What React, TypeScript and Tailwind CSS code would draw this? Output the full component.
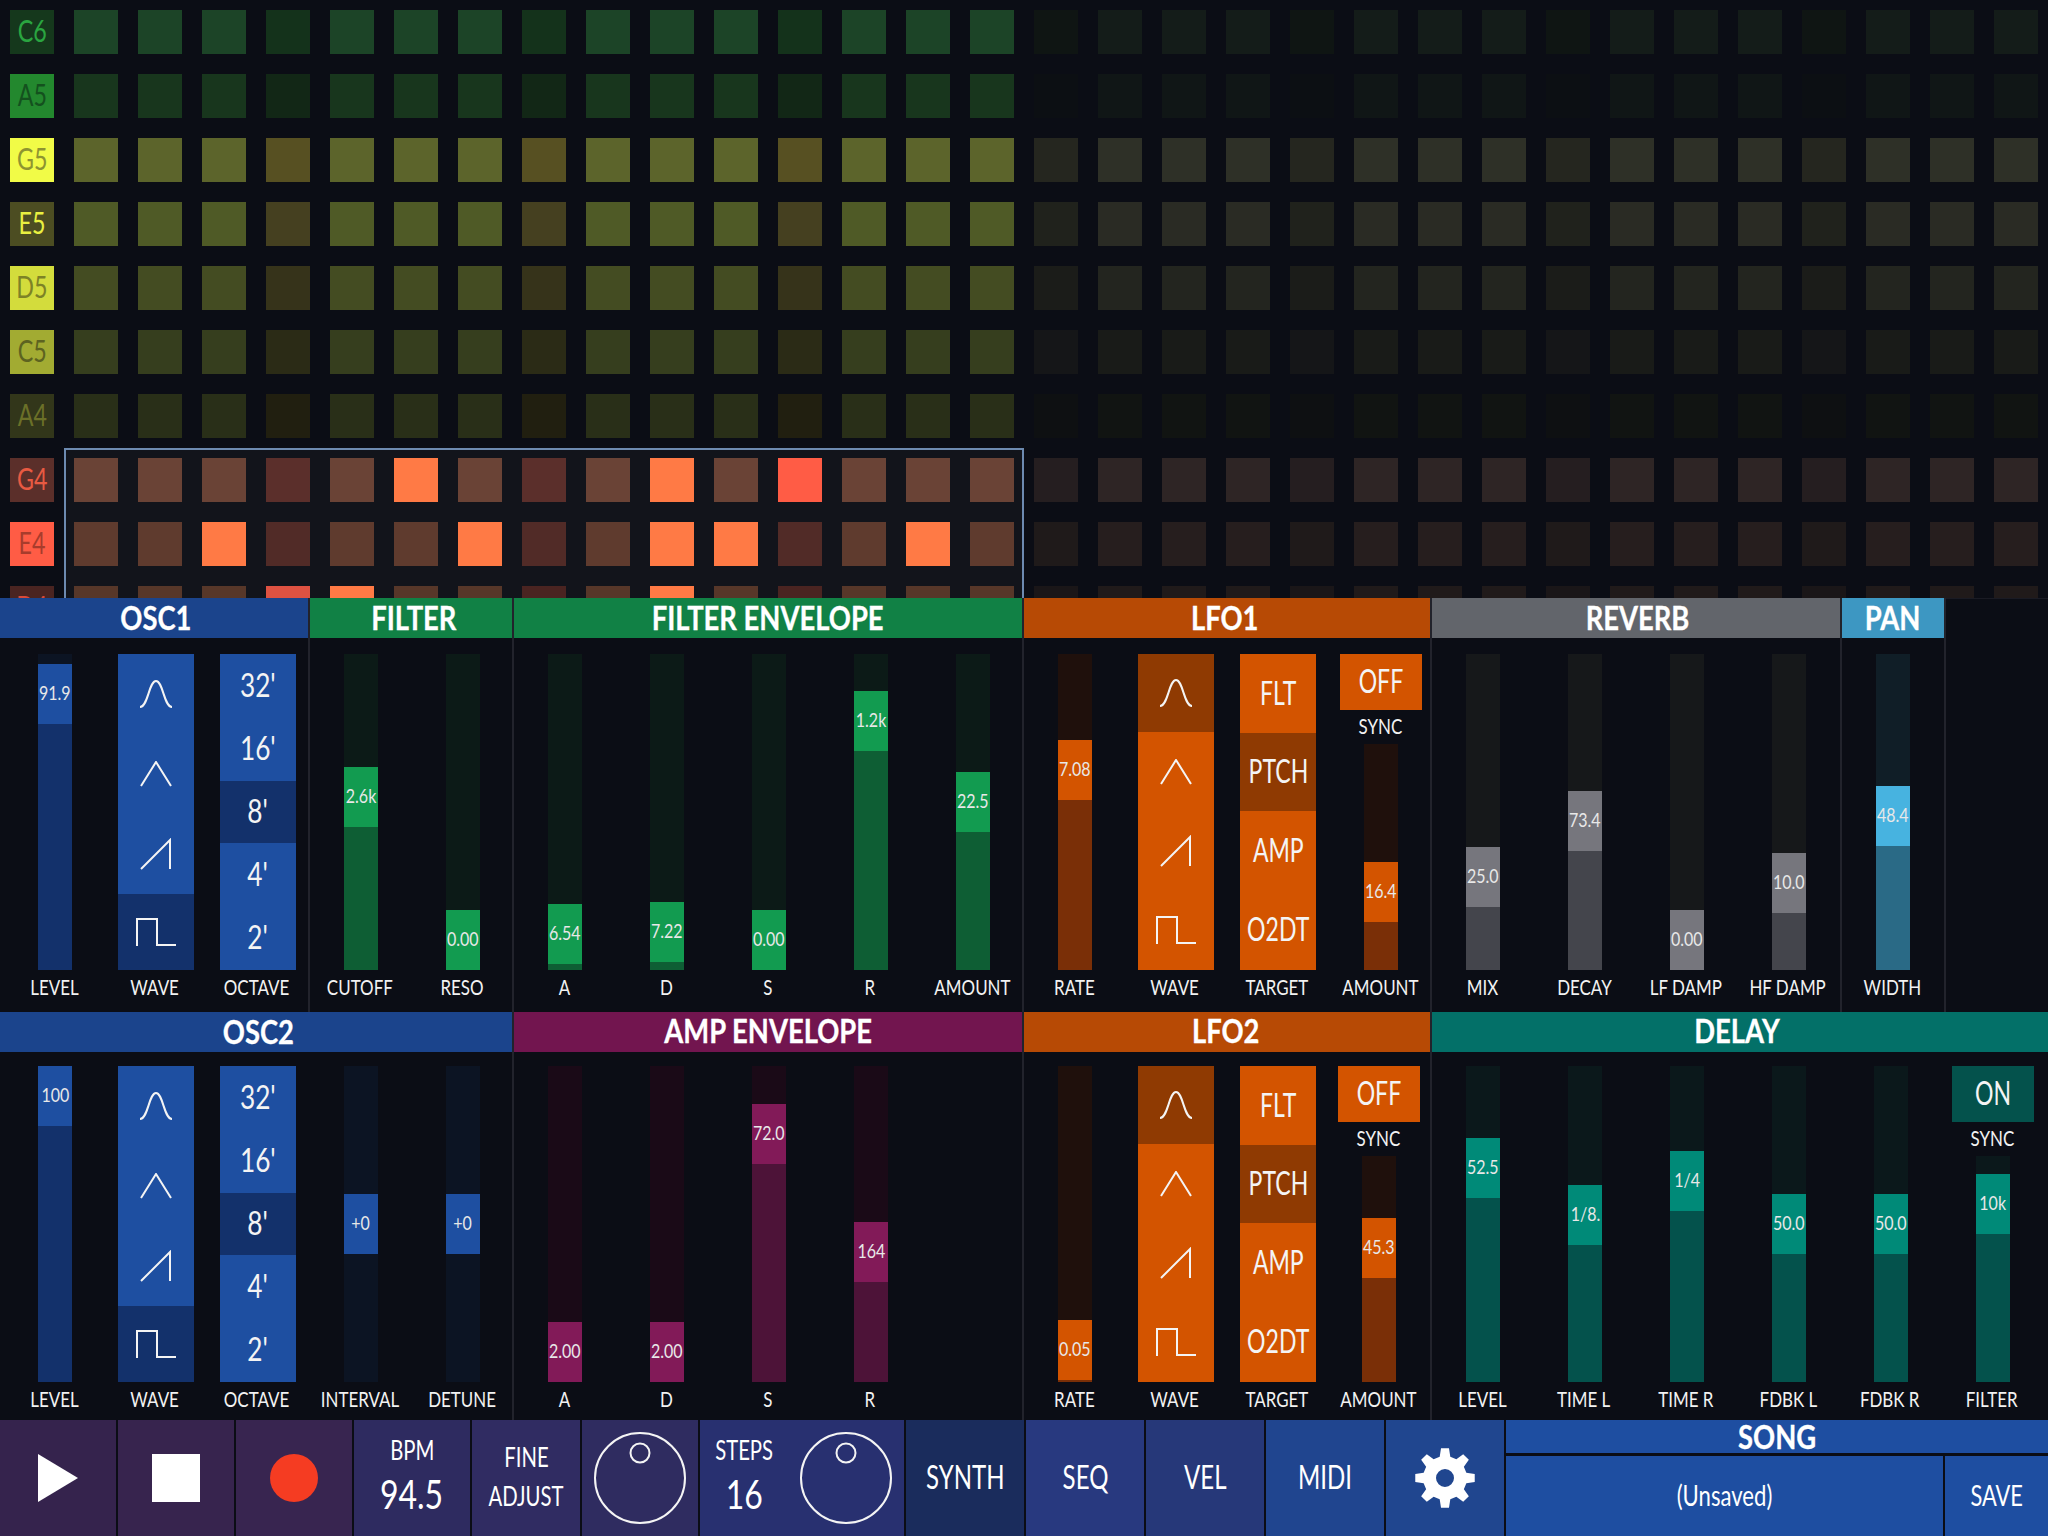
import type { ReactNode } from "react";

// colour sets per synth section
type Pal = { head: string; thumb: string; fill: string; track: string; on: string; off: string };

const blue: Pal = { head: "bg-[#1b448c]", thumb: "bg-[#1e4fa1]", fill: "bg-[#13316b]", track: "bg-[#0c1423]", on: "bg-[#1e4fa1]", off: "bg-[#13316b]" };
const green: Pal = { head: "bg-[#118145]", thumb: "bg-[#129b50]", fill: "bg-[#0e5e34]", track: "bg-[#0c1a17]", on: "bg-[#129b50]", off: "bg-[#0e5e34]" };
const orange: Pal = { head: "bg-[#b74a05]", thumb: "bg-[#d35400]", fill: "bg-[#7a2f07]", track: "bg-[#1f100c]", on: "bg-[#d35400]", off: "bg-[#8f3a02]" };
const gray: Pal = { head: "bg-[#62656b]", thumb: "bg-[#76767d]", fill: "bg-[#44454c]", track: "bg-[#16181a]", on: "bg-[#76767d]", off: "bg-[#44454c]" };
const pan: Pal = { head: "bg-[#3d97c2]", thumb: "bg-[#47b3e0]", fill: "bg-[#2a6a86]", track: "bg-[#101e27]", on: "bg-[#47b3e0]", off: "bg-[#2a6a86]" };
const magenta: Pal = { head: "bg-[#72154f]", thumb: "bg-[#821a58]", fill: "bg-[#4d1338]", track: "bg-[#1a0a17]", on: "bg-[#821a58]", off: "bg-[#4d1338]" };
const teal: Pal = { head: "bg-[#037068]", thumb: "bg-[#008a78]", fill: "bg-[#04524c]", track: "bg-[#0b181b]", on: "bg-[#04524c]", off: "bg-[#04524c]" };

// Lato squeezed sideways stands in for the condensed face of the app
function Cond({ children, x = "scale-x-[0.77]", y = "" }: { children: ReactNode; x?: string; y?: string }) {
  return <span className={`inline-block whitespace-nowrap origin-center ${x} ${y}`}>{children}</span>;
}

function Label({ text }: { text: string }) {
  return (
    <div className="h-[34px] flex items-center justify-center text-[22px] text-[#f2f2f2]">
      <Cond y="-translate-x-[1px] -translate-y-[1px]">{text}</Cond>
    </div>
  );
}

function Bar({ pal, value, top, height = "h-[316px]", noFill }: { pal: Pal; value: string; top: number; height?: string; noFill?: boolean }) {
  return (
    <div className={`w-[34px] flex flex-col ${height} ${pal.track}`}>
      <div className="shrink-0" style={{ height: top }} />
      <div className={`h-[60px] shrink-0 flex items-center justify-center text-[20px] text-[#e8e8e8] ${pal.thumb}`}>
        <Cond x="scale-x-[0.8]" y="-translate-y-[2px]">{value}</Cond>
      </div>
      <div className={`flex-1 ${noFill ? "" : pal.fill}`} />
    </div>
  );
}

function Slider({ pal, value, top, label, ml, noFill }: { pal: Pal; value: string; top: number; label: string; ml: string; noFill?: boolean }) {
  return (
    <div className={`w-[34px] shrink-0 flex flex-col items-center ${ml}`}>
      <Bar pal={pal} value={value} top={top} noFill={noFill} />
      <Label text={label} />
    </div>
  );
}

function SineIcon() {
  return (
    <svg width="34" height="28" viewBox="0 0 34 28" fill="none" stroke="#f4f4f4" strokeWidth="2">
      <path d="M1 27 C9 27 10 1 17 1 C24 1 25 27 33 27" />
    </svg>
  );
}

function TriIcon() {
  return (
    <svg width="34" height="26" viewBox="0 0 34 26" fill="none" stroke="#f4f4f4" strokeWidth="2">
      <path d="M2 25 L17 1 L32 25" />
    </svg>
  );
}

function RampIcon() {
  return (
    <svg width="32" height="32" viewBox="0 0 32 32" fill="none" stroke="#f4f4f4" strokeWidth="2">
      <path d="M1 31 L30 2 V31" />
    </svg>
  );
}

function SquareIcon() {
  return (
    <svg width="40" height="28" viewBox="0 0 40 28" fill="none" stroke="#f4f4f4" strokeWidth="2">
      <path d="M1 28 V1 H21 V27 H40" />
    </svg>
  );
}

const waves = [<SineIcon />, <TriIcon />, <RampIcon />, <SquareIcon />];

function Stack({ pal, items, selected, selH, label, ml }: { pal: Pal; items: ReactNode[]; selected: number; selH: string; label: string; ml: string }) {
  return (
    <div className={`w-[76px] shrink-0 flex flex-col items-center ${ml}`}>
      <div className="w-full h-[316px] flex flex-col">
        {items.map((it, i) => (
          <div key={i} className={`flex items-center justify-center text-[32px] text-[#f4f4f4] ${i === selected ? `${selH} shrink-0 ${pal.off}` : `flex-1 ${pal.on}`}`}>
            {it}
          </div>
        ))}
      </div>
      <Label text={label} />
    </div>
  );
}

function Sync({ pal, text, value, top, label, ml, w }: { pal: Pal; text: string; value: string; top: number; label: string; ml: string; w: string }) {
  return (
    <div className={`shrink-0 flex flex-col items-center ${w} ${ml}`}>
      <div className={`w-full h-[56px] flex items-center justify-center text-[32px] text-[#f4f4f4] ${pal.on}`}>
        <Cond x="scale-x-[0.72]" y="-translate-y-[1px]">{text}</Cond>
      </div>
      <div className="h-[34px] flex items-center justify-center text-[22px] text-[#f2f2f2]">
        <Cond y="-translate-x-[1px] -translate-y-[2px]">SYNC</Cond>
      </div>
      <Bar pal={pal} value={value} top={top} height="h-[226px]" />
      <Label text={label} />
    </div>
  );
}

function Section({ pal, title, w, pt, nudge = "", border = true, children }: { pal: Pal; title: string; w: string; pt: string; nudge?: string; border?: boolean; children: ReactNode }) {
  return (
    <div className={`h-full shrink-0 flex flex-col ${w} ${border ? "border-r-2 border-[#22232c]" : ""}`}>
      <div className={`h-[40px] shrink-0 flex items-center justify-center text-[33px] font-bold text-white [-webkit-text-stroke:0.3px_white] ${pal.head}`}>
        <Cond x="scale-x-[0.83]" y={nudge}>{title}</Cond>
      </div>
      <div className={`flex ${pt}`}>{children}</div>
    </div>
  );
}

const octave = ["32'", "16'", "8'", "4'", "2'"].map((t) => (
  <Cond x="scale-x-[0.82]" y="-translate-y-[1.5px]">{t}</Cond>
));
const targets = ["FLT", "PTCH", "AMP", "O2DT"].map((t) => (
  <Cond x="scale-x-[0.72]" y="-translate-y-[1px]">{t}</Cond>
));

// note rows of the sequencer: label colours, pad colour, pad on beat, dimmed page colours
const rows = [
  { n: "C6", bg: "bg-[#15381c]", tx: "text-[#2aa540]", pad: "bg-[#1c4427]", beat: "bg-[#14321b]", dim: "bg-[#141c19]", dimBeat: "bg-[#0f1513]" },
  { n: "A5", bg: "bg-[#23882e]", tx: "text-[#14511e]", pad: "bg-[#18361d]", beat: "bg-[#122716]", dim: "bg-[#101616]", dimBeat: "bg-[#0c0f13]" },
  { n: "G5", bg: "bg-[#f1fb47]", tx: "text-[#8e9430]", pad: "bg-[#5c642b]", beat: "bg-[#575022]", dim: "bg-[#2e3027]", dimBeat: "bg-[#25261f]" },
  { n: "E5", bg: "bg-[#4c4d22]", tx: "text-[#e9f041]", pad: "bg-[#4f5a26]", beat: "bg-[#454020]", dim: "bg-[#2a2b24]", dimBeat: "bg-[#20221c]" },
  { n: "D5", bg: "bg-[#d3dc3c]", tx: "text-[#7d8226]", pad: "bg-[#444c22]", beat: "bg-[#36331a]", dim: "bg-[#23251f]", dimBeat: "bg-[#1b1c19]" },
  { n: "C5", bg: "bg-[#a2ab32]", tx: "text-[#5d6320]", pad: "bg-[#363e1e]", beat: "bg-[#2b2b16]", dim: "bg-[#191b18]", dimBeat: "bg-[#151618]" },
  { n: "A4", bg: "bg-[#32361a]", tx: "text-[#6b7028]", pad: "bg-[#292f18]", beat: "bg-[#211f10]", dim: "bg-[#111412]", dimBeat: "bg-[#0e1012]" },
  { n: "G4", bg: "bg-[#5b2f2a]", tx: "text-[#e85a42]", pad: "bg-[#6a4336]", beat: "bg-[#5b2f2b]", dim: "bg-[#2e2525]", dimBeat: "bg-[#251e20]" },
  { n: "E4", bg: "bg-[#ff5c45]", tx: "text-[#a83c2c]", pad: "bg-[#5f3b2e]", beat: "bg-[#512b27]", dim: "bg-[#261e1e]", dimBeat: "bg-[#1f1a1a]" },
  { n: "D4", bg: "bg-[#4a2421]", tx: "text-[#d84a3a]", pad: "bg-[#573729]", beat: "bg-[#4a2421]", dim: "bg-[#201a1a]", dimBeat: "bg-[#1a1618]" },
];

const lit: Record<string, Record<number, string>> = {
  G4: { 5: "bg-[#ff7a45]", 9: "bg-[#ff7a45]", 11: "bg-[#ff5c45]" },
  E4: { 2: "bg-[#ff7a45]", 6: "bg-[#ff7a45]", 9: "bg-[#ff7a45]", 10: "bg-[#ff7a45]", 13: "bg-[#ff7a45]" },
  D4: { 3: "bg-[#de5242]", 4: "bg-[#ff7a45]", 9: "bg-[#ff7a45]" },
};

function Sequencer() {
  return (
    <div className="relative h-[598px] overflow-hidden">
      <div className="absolute left-[64px] top-[448px] w-[960px] h-[160px] border-2 border-[#6d8ab0] bg-[#12141b]" />
      <div className="relative flex flex-col gap-[20px] pt-[10px] pl-[10px]">
        {rows.map((r) => (
          <div key={r.n} className="flex gap-[20px]">
            <div className={`w-[44px] h-[44px] shrink-0 flex items-center justify-center text-[31px] ${r.bg} ${r.tx}`}>
              <Cond x="scale-x-[0.75]" y="-translate-y-[2px]">{r.n}</Cond>
            </div>
            {Array.from({ length: 31 }).map((_, i) => {
              const onBeat = i % 4 === 3;
              const col = i < 15 ? lit[r.n]?.[i] ?? (onBeat ? r.beat : r.pad) : onBeat ? r.dimBeat : r.dim;
              return <div key={i} className={`w-[44px] h-[44px] shrink-0 ${col}`} />;
            })}
          </div>
        ))}
      </div>
    </div>
  );
}

function TopPanels() {
  return (
    <div className="h-[414px] flex">
      <Section pal={blue} title="OSC1" w="w-[310px]" pt="pt-[16px]" nudge="translate-x-[2px]">
        <Slider pal={blue} value="91.9" top={10} label="LEVEL" ml="ml-[38px]" />
        <Stack pal={blue} items={waves} selected={3} selH="h-[76px]" label="WAVE" ml="ml-[46px]" />
        <Stack pal={blue} items={octave} selected={2} selH="h-[62px]" label="OCTAVE" ml="ml-[26px]" />
      </Section>
      <Section pal={green} title="FILTER" w="w-[204px]" pt="pt-[16px]" nudge="translate-x-[2.5px]">
        <Slider pal={green} value="2.6k" top={113} label="CUTOFF" ml="ml-[34px]" />
        <Slider pal={green} value="0.00" top={256} label="RESO" ml="ml-[68px]" />
      </Section>
      <Section pal={green} title="FILTER ENVELOPE" w="w-[510px]" pt="pt-[16px]">
        <Slider pal={green} value="6.54" top={250} label="A" ml="ml-[34px]" />
        <Slider pal={green} value="7.22" top={248} label="D" ml="ml-[68px]" />
        <Slider pal={green} value="0.00" top={256} label="S" ml="ml-[68px]" />
        <Slider pal={green} value="1.2k" top={37} label="R" ml="ml-[68px]" />
        <Slider pal={green} value="22.5" top={118} label="AMOUNT" ml="ml-[68px]" />
      </Section>
      <Section pal={orange} title="LFO1" w="w-[408px]" pt="pt-[16px]" nudge="-translate-x-[2px]">
        <Slider pal={orange} value="7.08" top={86} label="RATE" ml="ml-[34px]" />
        <Stack pal={orange} items={waves} selected={0} selH="h-[78px]" label="WAVE" ml="ml-[46px]" />
        <Stack pal={orange} items={targets} selected={1} selH="h-[78px]" label="TARGET" ml="ml-[26px]" />
        <Sync pal={orange} text="OFF" value="16.4" top={118} label="AMOUNT" ml="ml-[24px]" w="w-[82px]" />
      </Section>
      <Section pal={gray} title="REVERB" w="w-[410px]" pt="pt-[16px]" nudge="translate-x-[2px]">
        <Slider pal={gray} value="25.0" top={193} label="MIX" ml="ml-[34px]" />
        <Slider pal={gray} value="73.4" top={137} label="DECAY" ml="ml-[68px]" />
        <Slider pal={gray} value="0.00" top={256} label="LF DAMP" ml="ml-[68px]" />
        <Slider pal={gray} value="10.0" top={199} label="HF DAMP" ml="ml-[68px]" />
      </Section>
      <Section pal={pan} title="PAN" w="w-[104px]" pt="pt-[16px]">
        <Slider pal={pan} value="48.4" top={132} label="WIDTH" ml="ml-[34px]" />
      </Section>
      <div className="flex-1 border-t border-[#1a1b24]" />
    </div>
  );
}

function BottomPanels() {
  return (
    <div className="h-[408px] flex">
      <Section pal={blue} title="OSC2" w="w-[514px]" pt="pt-[14px]" nudge="translate-x-[2.5px]">
        <Slider pal={blue} value="100" top={0} label="LEVEL" ml="ml-[38px]" />
        <Stack pal={blue} items={waves} selected={3} selH="h-[76px]" label="WAVE" ml="ml-[46px]" />
        <Stack pal={blue} items={octave} selected={2} selH="h-[62px]" label="OCTAVE" ml="ml-[26px]" />
        <Slider pal={blue} value="+0" top={128} label="INTERVAL" ml="ml-[48px]" noFill />
        <Slider pal={blue} value="+0" top={128} label="DETUNE" ml="ml-[68px]" noFill />
      </Section>
      <Section pal={magenta} title="AMP ENVELOPE" w="w-[510px]" pt="pt-[14px]" nudge="-translate-y-[1px]">
        <Slider pal={magenta} value="2.00" top={256} label="A" ml="ml-[34px]" />
        <Slider pal={magenta} value="2.00" top={256} label="D" ml="ml-[68px]" />
        <Slider pal={magenta} value="72.0" top={38} label="S" ml="ml-[68px]" />
        <Slider pal={magenta} value="164" top={156} label="R" ml="ml-[68px]" />
      </Section>
      <Section pal={orange} title="LFO2" w="w-[408px]" pt="pt-[14px]" nudge="-translate-x-[1px] -translate-y-[1px]">
        <Slider pal={orange} value="0.05" top={254} label="RATE" ml="ml-[34px]" />
        <Stack pal={orange} items={waves} selected={0} selH="h-[78px]" label="WAVE" ml="ml-[46px]" />
        <Stack pal={orange} items={targets} selected={1} selH="h-[78px]" label="TARGET" ml="ml-[26px]" />
        <Sync pal={orange} text="OFF" value="45.3" top={62} label="AMOUNT" ml="ml-[22px]" w="w-[82px]" />
      </Section>
      <Section pal={teal} title="DELAY" w="w-[616px]" pt="pt-[14px]" nudge="-translate-x-[2.5px] -translate-y-[1px]" border={false}>
        <Slider pal={teal} value="52.5" top={72} label="LEVEL" ml="ml-[34px]" />
        <Slider pal={teal} value="1/8." top={119} label="TIME L" ml="ml-[68px]" />
        <Slider pal={teal} value="1/4" top={85} label="TIME R" ml="ml-[68px]" />
        <Slider pal={teal} value="50.0" top={128} label="FDBK L" ml="ml-[68px]" />
        <Slider pal={teal} value="50.0" top={128} label="FDBK R" ml="ml-[68px]" />
        <Sync pal={teal} text="ON" value="10k" top={18} label="FILTER" ml="ml-[44px]" w="w-[82px]" />
      </Section>
    </div>
  );
}

function Knob() {
  return (
    <svg width="92" height="92" viewBox="0 0 92 92" fill="none" stroke="#f4f4f4" strokeWidth="2">
      <circle cx="46" cy="46" r="45" />
      <circle cx="46" cy="21" r="9.5" />
    </svg>
  );
}

// 8 toothed gear, built as one path with a round hole
function gearPath() {
  const pts: string[] = [];
  const teeth = 8;
  for (let i = 0; i < teeth; i++) {
    const a = (i / teeth) * Math.PI * 2 - Math.PI / 2;
    const seg = (Math.PI * 2) / teeth;
    const offs: [number, number][] = [
      [-seg * 0.31, 22],
      [-seg * 0.17, 30],
      [seg * 0.17, 30],
      [seg * 0.31, 22],
    ];
    offs.forEach(([d, r]) => {
      pts.push(`${(30 + Math.cos(a + d) * r).toFixed(2)} ${(30 + Math.sin(a + d) * r).toFixed(2)}`);
    });
  }
  return `M${pts.join(" L")} Z M30 21 A9 9 0 1 0 30 39 A9 9 0 1 0 30 21 Z`;
}

function Cell({ w, bg, children }: { w: string; bg: string; children?: ReactNode }) {
  return (
    <div className={`h-full shrink-0 flex items-center justify-center text-white border-r-2 border-[#0b0d15] ${w} ${bg}`}>
      {children}
    </div>
  );
}

function Readout({ label, value }: { label: string; value: string }) {
  return (
    <div className="flex flex-col items-center gap-[2px]">
      <span className="h-[30px] flex items-center text-[26px]">
        <Cond x="scale-x-[0.78]" y="-translate-y-[4px]">{label}</Cond>
      </span>
      <span className="h-[46px] flex items-center text-[40px]">
        <Cond x="scale-x-[0.8]">{value}</Cond>
      </span>
    </div>
  );
}

function NavText({ text }: { text: string }) {
  return (
    <span className="text-[32px]">
      <Cond x="scale-x-[0.75]" y="-translate-y-[1px]">{text}</Cond>
    </span>
  );
}

function Transport() {
  return (
    <div className="h-[116px] flex">
      <Cell w="w-[118px]" bg="bg-[#35234d]">
        <svg width="40" height="48" viewBox="0 0 40 48">
          <path d="M0 0 L40 24 L0 48 Z" fill="#fff" />
        </svg>
      </Cell>
      <Cell w="w-[118px]" bg="bg-[#37244e]">
        <div className="w-[48px] h-[48px] bg-white" />
      </Cell>
      <Cell w="w-[118px]" bg="bg-[#382550]">
        <div className="w-[48px] h-[48px] rounded-full bg-[#f53c22]" />
      </Cell>
      <Cell w="w-[118px]" bg="bg-[#2e2b60]">
        <Readout label="BPM" value="94.5" />
      </Cell>
      <Cell w="w-[110px]" bg="bg-[#302c62]">
        <div className="flex flex-col items-center gap-[9px] text-[26px]">
          <span className="h-[30px] flex items-center"><Cond x="scale-x-[0.78]" y="-translate-y-[1px]">FINE</Cond></span>
          <span className="h-[30px] flex items-center"><Cond x="scale-x-[0.78]" y="-translate-y-[1px]">ADJUST</Cond></span>
        </div>
      </Cell>
      <Cell w="w-[118px]" bg="bg-[#2f2c60]">
        <Knob />
      </Cell>
      <Cell w="w-[206px]" bg="bg-[#283070]">
        <div className="w-full flex items-center">
          <div className="w-[88px] flex justify-center">
            <Readout label="STEPS" value="16" />
          </div>
          <div className="ml-[12px]">
            <Knob />
          </div>
        </div>
      </Cell>
      <Cell w="w-[120px]" bg="bg-[#1a2c5c]">
        <NavText text="SYNTH" />
      </Cell>
      <Cell w="w-[120px]" bg="bg-[#28397f]">
        <NavText text="SEQ" />
      </Cell>
      <Cell w="w-[120px]" bg="bg-[#263879]">
        <NavText text="VEL" />
      </Cell>
      <Cell w="w-[120px]" bg="bg-[#20458f]">
        <NavText text="MIDI" />
      </Cell>
      <Cell w="w-[120px]" bg="bg-[#20468f]">
        <svg width="60" height="60" viewBox="0 0 60 60">
          <path d={gearPath()} fill="#fff" fillRule="evenodd" />
        </svg>
      </Cell>
      <div className="flex-1 h-full flex flex-col text-white">
        <div className="h-[33px] shrink-0 flex items-center justify-center bg-[#1e4ea1] text-[33px] font-bold [-webkit-text-stroke:0.3px_white]">
          <Cond x="scale-x-[0.83]">SONG</Cond>
        </div>
        <div className="flex-1 mt-[3px] flex">
          <div className="w-[439px] flex items-center justify-center bg-[#1e4ea1] text-[28px] border-r-2 border-[#0b0d15]">
            <Cond x="scale-x-[0.79]" y="-translate-y-[1px]">(Unsaved)</Cond>
          </div>
          <div className="flex-1 flex items-center justify-center bg-[#1e4ea1] text-[28px]">
            <Cond x="scale-x-[0.78]" y="-translate-y-[1px]">SAVE</Cond>
          </div>
        </div>
      </div>
    </div>
  );
}

export default function App() {
  return (
    <div className="w-[2048px] h-[1536px] overflow-hidden bg-[#0b0d15] font-[Lato,sans-serif]">
      <Sequencer />
      <TopPanels />
      <BottomPanels />
      <Transport />
    </div>
  );
}
